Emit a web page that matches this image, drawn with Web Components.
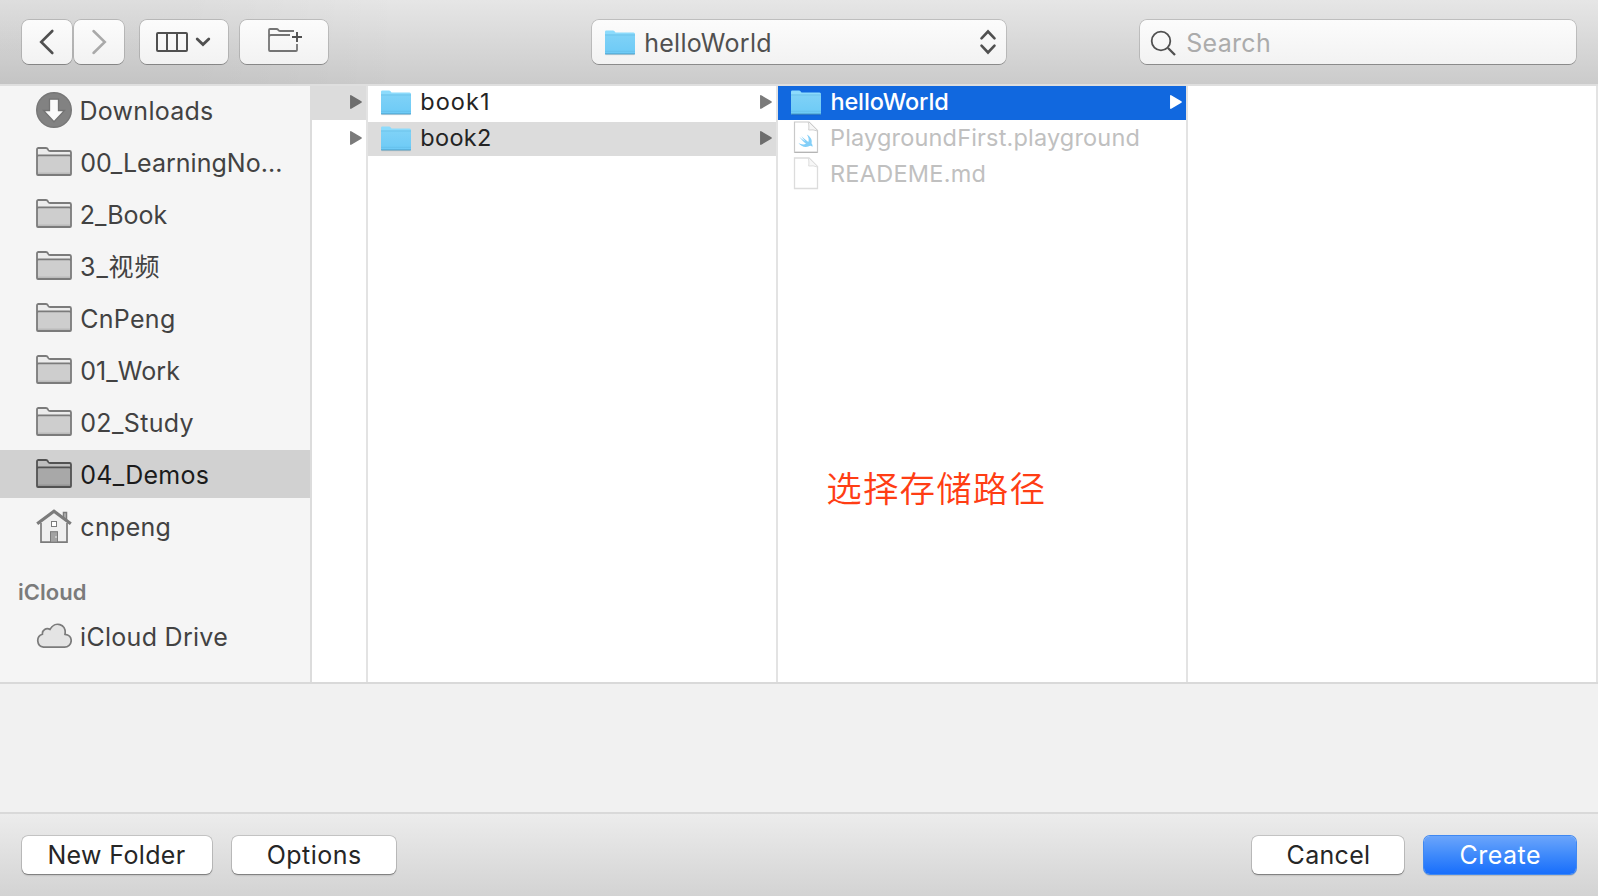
<!DOCTYPE html>
<html lang="en">
<head>
<meta charset="utf-8">
<title>Save dialog</title>
<style>
html, body { margin: 0; height: 100%; overflow: hidden; }
body { font-family: Inter, "Noto Sans CJK SC", sans-serif; }
</style>
</head>
<body>
<save-dialog></save-dialog>
<script>
const FONT = 'Inter, "Noto Sans CJK SC", sans-serif';
const define = (name, html, ready) => {
  const t = document.createElement('template');
  t.innerHTML = html;
  customElements.define(name, class extends HTMLElement {
    connectedCallback() {
      if (this.shadowRoot) return;
      this.attachShadow({ mode: 'open' }).append(t.content.cloneNode(true));
      if (ready) ready(this, this.shadowRoot);
    }
  });
};

/* A single line of text, tracked so that its glyphs span the width in "w". */
const ctx = document.createElement('canvas').getContext('2d');
define('fit-label', `
<style>
:host { display: block; flex: none; white-space: nowrap; line-height: 30px; }
span { display: inline-block; }
</style><span><slot></slot></span>`, (el, root) => {
  const size = +el.getAttribute('size') || 25;
  const weight = el.getAttribute('weight') || 430;
  const text = el.textContent;
  const w = +el.getAttribute('w');
  el.style.fontSize = size + 'px';
  el.style.fontWeight = weight;
  el.style.width = w + 'px';
  ctx.font = `${weight} ${size}px ${FONT}`;
  const advance = ctx.measureText(text).width;
  /* side bearings are read at 8x, since text boxes are rounded to whole pixels */
  ctx.font = `${weight} ${size * 8}px ${FONT}`;
  const m = ctx.measureText(text);
  const left = -m.actualBoundingBoxLeft / 8;
  const right = (m.width - m.actualBoundingBoxRight) / 8;
  const s = root.querySelector('span');
  s.style.letterSpacing = (w - .5 - (advance - left - right)) / ([...text].length - 1) + 'px';
  s.style.marginLeft = .3 - left + 'px';
});

/* Icons */
const sideFolder = `<svg width="36" height="30" viewBox="0 0 36 30"><path d="M1 28V2.5Q1 1 2.500 1H10Q11.300 1 11.800 2.200Q12.400 4 14 4H33.500Q35 4 35 5.500V28Z" fill="var(--tab,#ececec)"/><path d="M1 9Q1 8.400 2 8.400H34Q35 8.400 35 9V28H1Z" fill="var(--fill,#cecece)"/><path d="M2 26.500H34" stroke="var(--line,#7b7b7b)" stroke-opacity=".22" stroke-width="2"/><path d="M1 27V2.500Q1 1 2.500 1H10Q11.300 1 11.800 2.200Q12.400 4 14 4H33.500Q35 4 35 5.500V27Q35 28 34 28H2Q1 28 1 27ZM1 10Q1 8.400 2.600 8.400H33.400Q35 8.400 35 10" fill="none" stroke="var(--line,#7b7b7b)" stroke-width="1.800"/></svg>`;
const icons = {
  folder: sideFolder,
  download: `<svg width="36" height="36" viewBox="0 0 36 36"><circle cx="18" cy="18" r="17.300" fill="#828282" stroke="#777" stroke-width="1.400"/><path d="M13.500 7.200H22.500V18.500H28.500L18 29.800L7.500 18.500H13.500Z" fill="#fafafa" stroke="#737373" stroke-width="1.300"/></svg>`,
  home: `<svg width="36" height="35" viewBox="0 0 36 35"><path d="M27.400 12V3.500H30.600V14" fill="#aaa" stroke="#7b7b7b" stroke-width="1.300"/><path d="M5 13L18 3L31 13V33.200H5Z" fill="#efefef"/><path d="M5 14V33.200H31V14" fill="none" stroke="#7b7b7b" stroke-width="1.700"/><path d="M1.200 14.700L18 2.200L34.800 14.700" fill="none" stroke="#7b7b7b" stroke-width="3.200"/><rect x="15.500" y="12.500" width="5" height="5" fill="#fff" stroke="#7b7b7b"/><rect x="14.500" y="22.700" width="7" height="10.500" fill="#a3a3a3" stroke="#7b7b7b"/><path d="M20 27v2" stroke="#eee"/></svg>`,
  cloud: `<svg width="36" height="26" viewBox="0 0 36 26"><path d="M7.500 24.200A6.700 6.700 0 0 1 6.400 11.200C6 7 10.200 4.500 14 6.400C18.500-2.200 30.800 .5 29 11.300C33 11.500 35.200 14.300 35.200 17.600C35.200 21.500 32 24.200 28.500 24.200Z" fill="#e4e4e4" stroke="#7b7b7b" stroke-width="1.700"/></svg>`,
  blue: `<svg width="32" height="26" viewBox="0 0 32 26"><defs><linearGradient id="g" x2="0" y2="1"><stop stop-color="#7fd2f7"/><stop offset="1" stop-color="#6dcaf6"/></linearGradient></defs><path d="M1 24.300V1.800Q1 .6 2.300 .6H9Q10 .6 10.500 1.300L11.500 2.400H29.500Q31 2.400 31 4V24.300Z" fill="#8cdbfc"/><path d="M1 5H31V23.700H1Z" fill="url(#g)"/><path d="M1 4.900H31" stroke="#66bde6" stroke-width=".8"/><path d="M1 21.300H31" stroke="#62bbe6" stroke-width=".6"/><path d="M1 23.800H31" stroke="#4fa5d2" stroke-width="1"/><path d="M1.500 24.700H30.500" stroke="#000" stroke-opacity=".14"/></svg>`,
  page: `<svg width="26" height="33" viewBox="0 0 26 33"><path d="M1.500 1H16L24.500 9.500V31.500H1.500Z" fill="#fff" stroke="#dcdcdc" stroke-width="1.300"/><path d="M15.300 1C16 4 16 6 15.700 9Q20 8.200 24.500 10" fill="#f7f7f7" stroke="#dedede"/></svg>`,
  swift: `<svg width="26" height="33" viewBox="0 0 26 33"><path d="M1.500 1H16L24.500 9.500V31.200H1.500Z" fill="#fff" stroke="#c9c9c9" stroke-width="1.200"/><path d="M1.500 31.500H24.500" stroke="#b5b5b5"/><path d="M15.300 1C16 4 16 6 15.700 9Q20 8.200 24.500 10" fill="#f7f7f7" stroke="#d0d0d0"/><path d="M13.800 13.500C18.600 16.300 19.300 20 18.500 22.200C20 24 19.600 26 19.200 25.700C17.800 24.200 16.600 25 15.200 25.600C11.500 27 7.500 24.800 5.400 21.800C8 23.700 11 24 13 22.700C10 20.500 8 18 6.300 15.800C8.500 17.700 11 19.700 12.400 20.400C10.800 18.800 9.300 16.700 8.300 15.100C10.500 17.300 13.500 19.800 15.300 21C16.300 18.700 15.400 15.700 13.800 13.500Z" fill="#83cff8"/></svg>`,
  arrow: `<svg width="12" height="16" viewBox="0 0 12 16"><path d="M.8 1.800L11 8L.8 14.200Z" fill="currentColor" stroke="currentColor" stroke-width="1.500" stroke-linejoin="round"/></svg>`,
  back: `<svg width="50" height="44" viewBox="22 20 50 44"><path d="M52.300 31L41.200 42L52.300 53" fill="none" stroke="#505050" stroke-width="2.600" stroke-linecap="round"/></svg>`,
  forward: `<svg width="50" height="44" viewBox="74 20 50 44"><path d="M93.500 31L104.800 42L93.500 53" fill="none" stroke="#a9a9a9" stroke-width="2.500" stroke-linecap="round"/></svg>`,
  columns: `<svg width="88" height="44" viewBox="140 20 88 44"><g fill="none" stroke="#505050"><rect x="157" y="33" width="30" height="18" rx="1" stroke-width="2"/><path d="M167 33V51M177 33V51" stroke-width="2"/><path d="M197.200 39L203 44.600L208.800 39" stroke-width="2.800" stroke-linecap="round"/></g></svg>`,
  newfolder: `<svg width="88" height="44" viewBox="240 20 88 44"><g fill="none" stroke="#747474" stroke-width="1.800"><path d="M294 31H280Q278.800 31 278.300 30Q277.700 29 276.500 29H270Q269 29 269 30V50Q269 51 270 51H296Q297 51 297 50V44M269 37Q269 35 271 35H290"/></g><path d="M292 37H302M297 32V42" stroke="#505050" stroke-width="1.900"/></svg>`,
  stepper: `<svg width="18" height="28" viewBox="979.500 28 18 28"><path d="M982 38.300L988.500 31.500L995 38.300M982 45.700L988.500 52.500L995 45.700" fill="none" stroke="#505050" stroke-width="2.600" stroke-linecap="round"/></svg>`,
  search: `<svg width="28" height="28" viewBox="1150 28 28 28"><g fill="none" stroke="#505050"><circle cx="1161" cy="41" r="9.300" stroke-width="1.800"/><path d="M1168 48L1175 55" stroke-width="2.300"/></g></svg>`
};
define('ui-icon', `<style>:host{display:block;flex:none;line-height:0}svg{display:block}</style><div></div>`, (el, root) => {
  root.querySelector('div').innerHTML = icons[el.getAttribute('name')];
});

/* Toolbar control */
define('tool-button', `
<style>
:host { display: flex; align-items: center; box-sizing: border-box; height: 44px; flex: none; border-radius: 7px;
  background: linear-gradient(#fcfcfc, #f2f2f2);
  box-shadow: 0 0 0 .7px rgba(0,0,0,.2), 0 1px 0 rgba(0,0,0,.22); }
</style><slot></slot>`);

define('push-button', `
<style>
:host { display: flex; align-items: center; justify-content: center; box-sizing: border-box; height: 38px; flex: none;
  border-radius: 6px; background: #fff; color: #262626;
  box-shadow: 0 0 0 .8px rgba(0,0,0,.2), 0 1px 0 rgba(0,0,0,.22), 0 1.500px 1.500px rgba(0,0,0,.1); }
:host([primary]) { color: #fff; background: linear-gradient(#6ba5fb, #3f8afb 50%, #186efc);
  box-shadow: 0 0 0 1px #3f88f2, 0 2px 1px rgba(0,0,0,.15); }
</style><slot></slot>`);

define('side-item', `
<style>
:host { display: flex; align-items: center; height: 48px; padding-left: 36px; margin-bottom: 4px; color: #424242; }
:host([selected]) { background: #d1d1d1; color: #1b1b1b; --line: #525252; --fill: #a8a8a8; --tab: #bebebe; }
.i { width: 36px; margin-right: 9.300px; }
.t { padding-top: 1px; }
</style><div class="i"></div><div class="t"><slot></slot></div>`, (el, root) => {
  root.querySelector('.i').innerHTML = `<ui-icon name="${el.getAttribute('icon')}"></ui-icon>`;
});

/* A row of a column; without an icon and a label it shows its arrow only. */
define('file-row', `
<style>
:host { display: flex; align-items: center; height: 34px; margin-bottom: 2px; padding: 0 4px 0 12px; color: #242424; box-sizing: border-box; }
:host([chosen]) { background: #dcdcdc; }
:host([selected]) { background: #1168df; color: #fff; }
:host([dim]) { color: #c0c0c0; }
.i { width: 32px; display: flex; justify-content: center; margin-right: 9.700px; margin-top: -1px; }
:host([dim]) .i { margin-top: -3px; }
.t { flex: 1; margin-top: -3px; }
.a { color: #7b7b7b; margin-top: -2px; }
:host([chosen]) .a { color: #6e6e6e; }
:host([selected]) .a { color: #fff; }
</style><div class="i"></div><div class="t"><slot></slot></div><div class="a"></div>`, (el, root) => {
  const icon = el.getAttribute('icon');
  if (icon) root.querySelector('.i').innerHTML = `<ui-icon name="${icon}"></ui-icon>`;
  if (!el.hasAttribute('dim')) root.querySelector('.a').innerHTML = '<ui-icon name="arrow"></ui-icon>';
});

define('file-column', `
<style>
:host { display: block; box-sizing: border-box; background: #fff; border-right: 2px solid #e3e3e3; overflow: hidden; }
</style><slot></slot>`);

define('dialog-toolbar', `
<style>
:host { display: flex; box-sizing: border-box; height: 86px; padding: 20px 22px 0; border-bottom: 2px solid #dfdfdf;
  background: linear-gradient(90deg, rgba(0,0,0,.035), rgba(0,0,0,.035) 190px, transparent 400px) padding-box, linear-gradient(#e6e6e6, #cbcbcb) padding-box; }
.back { width: 50px; margin-right: 2px; }
.fwd { width: 50px; margin-right: 16px; }
.view { width: 88px; margin-right: 12px; }
.new { width: 88px; }
.path { width: 414px; margin-left: 264px; padding-left: 12px; padding-right: 9px; color: #505050; }
.path ui-icon:first-child { padding-top: 1px; }
.path fit-label { margin-left: 9.700px; margin-right: auto; padding-top: 1px; }
.find { width: 436px; margin-left: auto; padding-left: 10px; color: #ababab; }
.find fit-label { margin-left: 9.300px; padding-top: 2px; }
</style>
<tool-button class="back"><ui-icon name="back"></ui-icon></tool-button>
<tool-button class="fwd"><ui-icon name="forward"></ui-icon></tool-button>
<tool-button class="view"><ui-icon name="columns"></ui-icon></tool-button>
<tool-button class="new"><ui-icon name="newfolder"></ui-icon></tool-button>
<tool-button class="path"><ui-icon name="blue"></ui-icon><fit-label w="124.300">helloWorld</fit-label><ui-icon name="stepper"></ui-icon></tool-button>
<tool-button class="find"><ui-icon name="search"></ui-icon><fit-label w="81.700">Search</fit-label></tool-button>`);

define('side-bar', `
<style>
:host { display: block; box-sizing: border-box; background: #f5f5f5; border-right: 2px solid #dcdcdc; overflow: hidden; }
.head { padding: 23px 0 5px 19px; color: #7b7b7b; }
</style>
<side-item icon="download"><fit-label w="131">Downloads</fit-label></side-item>
<side-item icon="folder"><fit-label w="199.300">00_LearningNo...</fit-label></side-item>
<side-item icon="folder"><fit-label w="86">2_Book</fit-label></side-item>
<side-item icon="folder"><fit-label w="77.600">3_视频</fit-label></side-item>
<side-item icon="folder"><fit-label w="92.300">CnPeng</fit-label></side-item>
<side-item icon="folder"><fit-label w="98.600">01_Work</fit-label></side-item>
<side-item icon="folder"><fit-label w="112">02_Study</fit-label></side-item>
<side-item icon="folder" selected><fit-label w="126.600">04_Demos</fit-label></side-item>
<side-item icon="home"><fit-label w="88">cnpeng</fit-label></side-item>
<div class="head"><fit-label size="22" weight="600" w="66.300">iCloud</fit-label></div>
<side-item icon="cloud"><fit-label w="145.400">iCloud Drive</fit-label></side-item>`);

define('column-browser', `
<style>
:host { display: grid; grid-template-columns: 312px 56px 410px 410px 410px; height: 598px; border-bottom: 2px solid #d9d9d9; box-sizing: border-box; }
.note { position: relative; }
.note > fit-label { position: absolute; left: 49.700px; top: 386px; line-height: 36px; color: #ff3d14; }
</style>
<side-bar></side-bar>
<file-column><file-row chosen></file-row><file-row></file-row></file-column>
<file-column>
  <file-row icon="blue"><fit-label size="23.500" w="66">book1</fit-label></file-row>
  <file-row icon="blue" chosen><fit-label size="23.500" w="68.300">book2</fit-label></file-row>
</file-column>
<file-column class="note">
  <file-row icon="blue" selected><fit-label size="23.500" weight="500" w="115.600">helloWorld</fit-label></file-row>
  <file-row icon="swift" dim><fit-label size="23.500" w="306.600">PlaygroundFirst.playground</fit-label></file-row>
  <file-row icon="page" dim><fit-label size="23.500" w="152.600">READEME.md</fit-label></file-row>
  <fit-label size="35.500" weight="350" w="216.300">选择存储路径</fit-label>
</file-column>
<file-column></file-column>`);

define('dialog-footer', `
<style>
:host { display: flex; box-sizing: border-box; height: 84px; padding: 22px 22px 0; border-top: 2px solid #d9d9d9;
  background: linear-gradient(#ececec, #d3d3d3) padding-box; }
.a { width: 190px; margin-right: 20px; } .b { width: 164px; }
.c { width: 152px; margin-left: auto; margin-right: 20px; } .d { width: 152px; }
</style>
<push-button class="a"><fit-label w="135.600">New Folder</fit-label></push-button>
<push-button class="b"><fit-label w="92.300">Options</fit-label></push-button>
<push-button class="c"><fit-label w="80.700">Cancel</fit-label></push-button>
<push-button class="d" primary><fit-label w="79">Create</fit-label></push-button>`);

define('save-dialog', `
<style>
:host { display: flex; flex-direction: column; width: 1598px; height: 896px; background: #f1f1f1; overflow: hidden; }
.space { flex: 1; }
</style>
<dialog-toolbar></dialog-toolbar>
<column-browser></column-browser>
<div class="space"></div>
<dialog-footer></dialog-footer>`);
</script>
</body>
</html>
